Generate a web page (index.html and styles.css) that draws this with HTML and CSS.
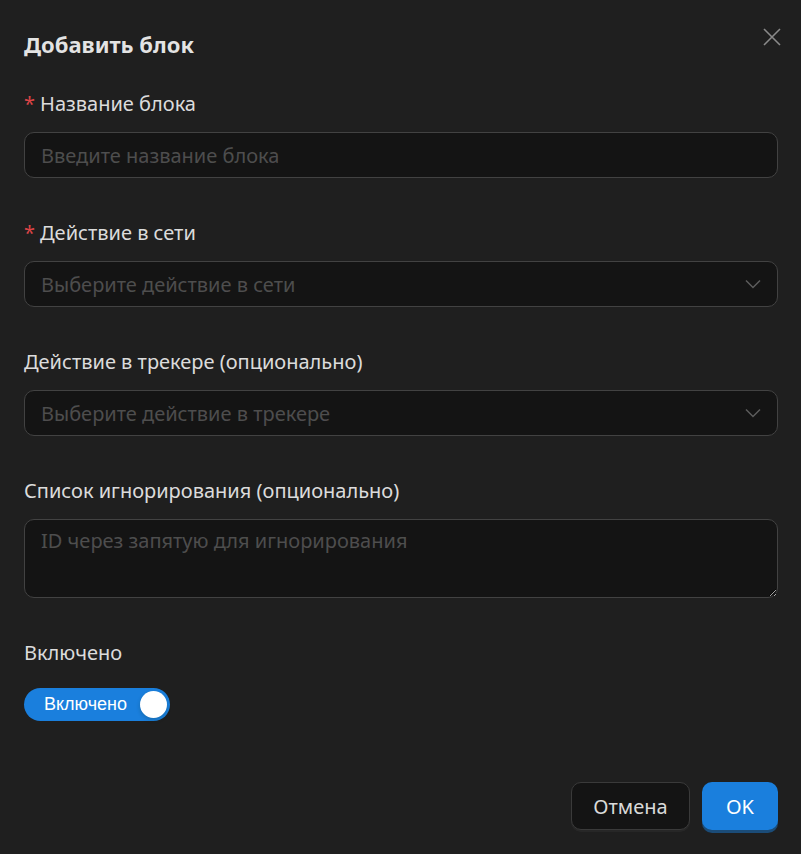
FILE: index.html
```html
<!DOCTYPE html>
<html lang="ru">

<head>
  <meta charset="UTF-8">
  <title>Добавить блок</title>
  <link rel="stylesheet" href="styles.css">
</head>

<body>
  <div class="modal">
    <div class="modal-header">
      <h2 class="modal-title">Добавить блок</h2>
      <button class="modal-close" aria-label="Закрыть">
        <svg width="18" height="18" viewBox="0 0 18 18">
          <path d="M1 1L17 17M17 1L1 17" stroke="currentColor" stroke-width="1.6" fill="none" />
        </svg>
      </button>
    </div>

    <form class="form">
      <div class="form-item">
        <label class="form-label required">Название блока</label>
        <input class="field" type="text" placeholder="Введите название блока">
      </div>

      <div class="form-item">
        <label class="form-label required">Действие в сети</label>
        <div class="field select">
          <span class="select-placeholder">Выберите действие в сети</span>
          <svg class="select-arrow" width="16" height="10" viewBox="0 0 16 10">
            <path d="M1 1.5L8 8.5L15 1.5" stroke="currentColor" stroke-width="1.5" fill="none" />
          </svg>
        </div>
      </div>

      <div class="form-item">
        <label class="form-label">Действие в трекере (опционально)</label>
        <div class="field select">
          <span class="select-placeholder">Выберите действие в трекере</span>
          <svg class="select-arrow" width="16" height="10" viewBox="0 0 16 10">
            <path d="M1 1.5L8 8.5L15 1.5" stroke="currentColor" stroke-width="1.5" fill="none" />
          </svg>
        </div>
      </div>

      <div class="form-item">
        <label class="form-label">Список игнорирования (опционально)</label>
        <textarea class="field textarea" placeholder="ID через запятую для игнорирования"></textarea>
      </div>

      <div class="form-item">
        <label class="form-label">Включено</label>
        <button type="button" class="switch">
          <span class="switch-text">Включено</span>
          <span class="switch-knob"></span>
        </button>
      </div>
    </form>

    <div class="modal-footer">
      <button class="btn btn-default">Отмена</button>
      <button class="btn btn-primary">OK</button>
    </div>
  </div>
</body>

</html>
```

FILE: styles.css
```css
/* Reset */
* {
  margin: 0;
  padding: 0;
  box-sizing: border-box;
}

html,
body {
  height: 100%;
  background: #1f1f1f;
  font-family: "Noto Sans", "Open Sans", sans-serif;
  color: rgba(255, 255, 255, 0.85);
}

.modal {
  padding: 28px 23px 24px 24px;
  min-height: 100%;
  display: flex;
  flex-direction: column;
}

/* Header with title and close icon */
.modal-header {
  display: flex;
  justify-content: space-between;
  align-items: flex-start;
}

.modal-title {
  font-size: 22px;
  font-weight: 700;
  line-height: 32px;
  color: rgba(255, 255, 255, 0.88);
}

.modal-close {
  background: none;
  border: none;
  color: #8a8a8a;
  cursor: pointer;
  margin-right: -3px;
  width: 18px;
  height: 18px;
  display: flex;
}

/* Form */
.form {
  margin-top: 30px;
  display: flex;
  flex-direction: column;
  gap: 41px;
}

.form-item {
  display: flex;
  flex-direction: column;
  align-items: flex-start;
}

.form-label {
  font-size: 20px;
  line-height: 28px;
  margin-bottom: 14px;
  color: rgba(255, 255, 255, 0.85);
}

.form-label.required::before {
  content: "*";
  color: #dc4446;
  margin-right: 5px;
}

.field {
  width: 100%;
  height: 46px;
  background: #141414;
  border: 1px solid #424242;
  border-radius: 10px;
  padding: 0 16px;
  font-family: inherit;
  font-size: 20px;
  color: rgba(255, 255, 255, 0.85);
  outline: none;
}

.field::placeholder {
  color: rgba(255, 255, 255, 0.25);
}

.select {
  display: flex;
  align-items: center;
  justify-content: space-between;
}

.select-placeholder {
  color: rgba(255, 255, 255, 0.25);
}

.select-arrow {
  color: #5c5c5c;
}

.textarea {
  height: 79px;
  padding: 6px 16px;
  line-height: 30px;
  resize: vertical;
  color-scheme: dark;
}

/* Switch */
.switch {
  margin-top: 7px;
  width: 146px;
  height: 33px;
  border: none;
  border-radius: 17px;
  background: #1a7fdd;
  display: flex;
  align-items: center;
  justify-content: space-between;
  padding: 0 3px 0 20px;
  cursor: pointer;
}

.switch-text {
  font-family: inherit;
  font-size: 18px;
  color: #fff;
}

.switch-knob {
  width: 27px;
  height: 27px;
  border-radius: 50%;
  background: #fff;
  box-shadow: 0 2px 4px rgba(0, 35, 11, 0.2);
}

/* Footer buttons */
.modal-footer {
  margin-top: auto;
  display: flex;
  justify-content: flex-end;
  gap: 12px;
}

.btn {
  height: 48px;
  border-radius: 10px;
  font-family: inherit;
  font-size: 20px;
  cursor: pointer;
}

.btn-default {
  width: 119px;
  background: #141414;
  border: 1px solid #3a3a3a;
  color: rgba(255, 255, 255, 0.85);
  box-shadow: 0 2px 0 rgba(255, 255, 255, 0.04);
}

.btn-primary {
  width: 76px;
  background: #1a7fdd;
  border: none;
  color: #fff;
  box-shadow: 0 3px 0 #1b4c78;
}
```
